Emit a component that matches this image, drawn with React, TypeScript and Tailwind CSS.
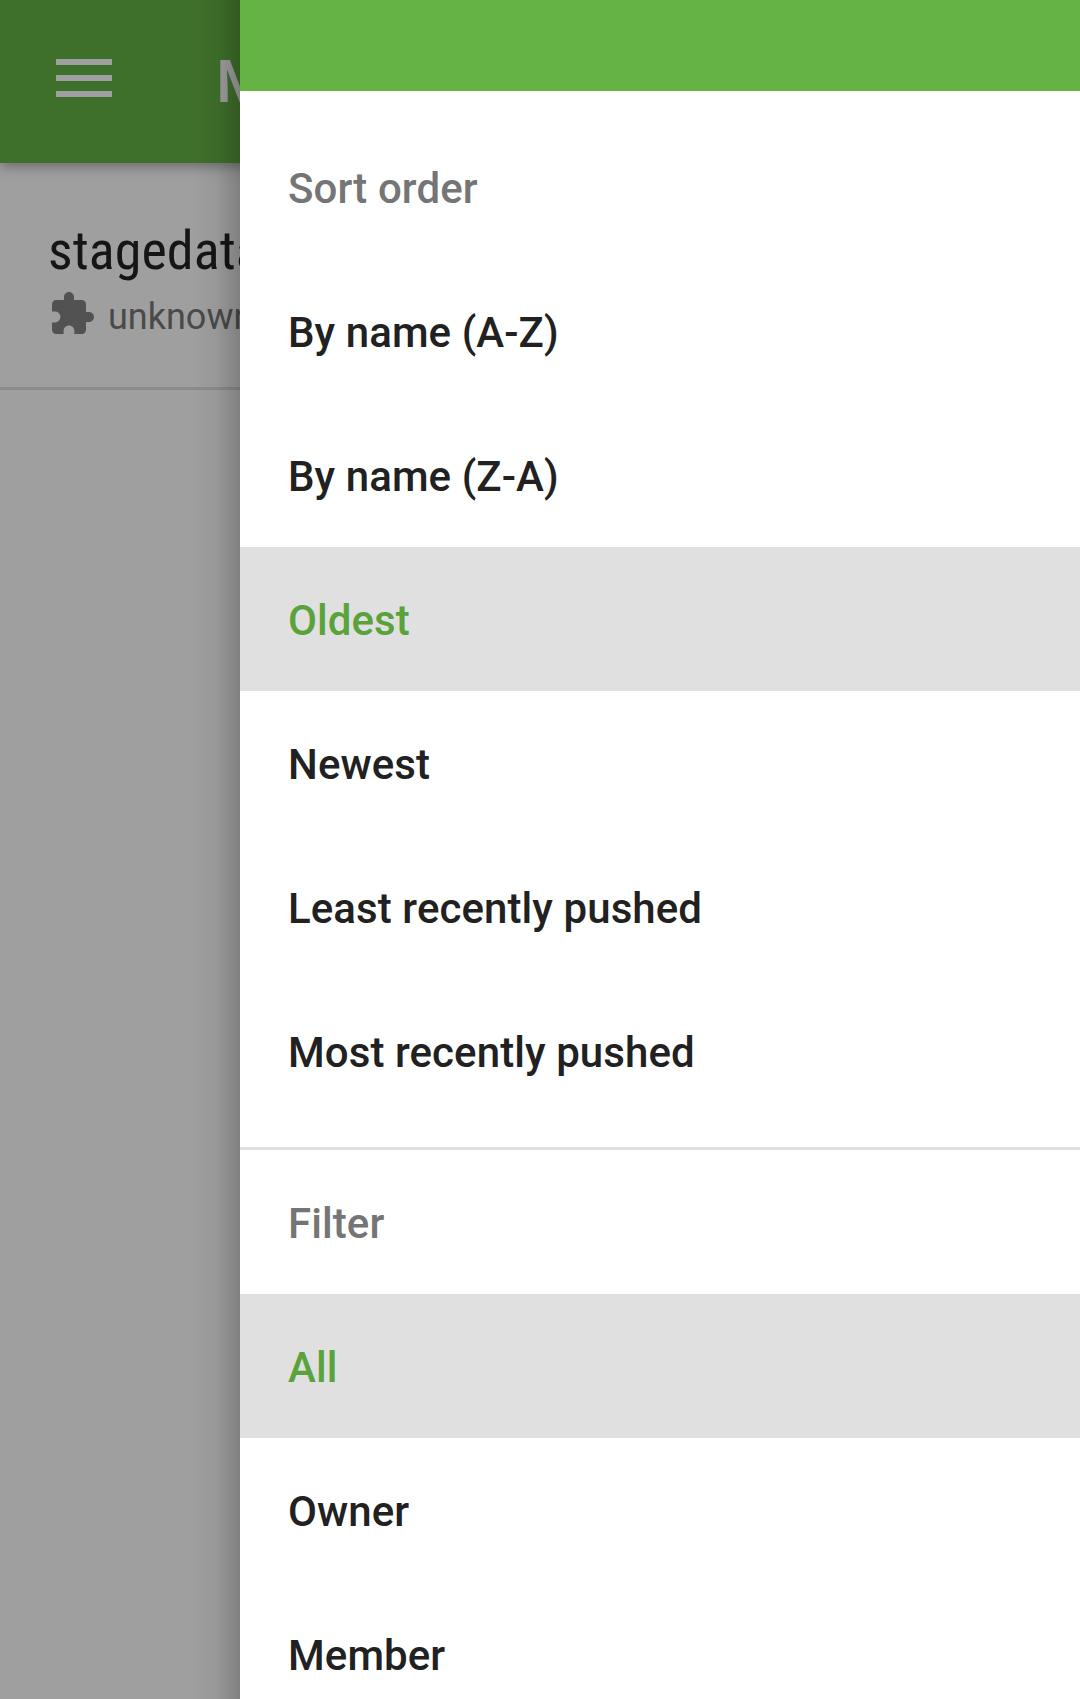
import React from "react";

type Entry = { label: string; selected?: boolean };

const sortOptions: Entry[] = [
  { label: "By name (A-Z)" },
  { label: "By name (Z-A)" },
  { label: "Oldest", selected: true },
  { label: "Newest" },
  { label: "Least recently pushed" },
  { label: "Most recently pushed" },
];

const filterOptions: Entry[] = [
  { label: "All", selected: true },
  { label: "Owner" },
  { label: "Member" },
];

function Item({ label, selected }: Entry) {
  return (
    <button
      className={
        selected
          ? "flex h-36 w-full shrink-0 items-center bg-[#e0e0e0] pt-0.5 pl-12 tracking-[0.08px] text-[#5aa23b]"
          : "flex h-36 w-full shrink-0 items-center pt-0.5 pl-12 tracking-[0.08px] text-[#212121]"
      }
    >
      {label}
    </button>
  );
}

function Heading({ children }: { children: string }) {
  return (
    <h2 className="flex h-36 shrink-0 items-center pt-0.5 pl-12 tracking-[0.08px] text-[#757575]">
      {children}
    </h2>
  );
}

export default function App() {
  return (
    <div className="relative h-[1699px] w-[1080px] overflow-hidden bg-[#9f9f9f] font-[Roboto,sans-serif]">
      <header className="relative flex h-[163px] items-center bg-[#3f702b] shadow-[0_3px_12px_rgba(0,0,0,0.35)]">
        <button aria-label="Menu" className="mb-[7px] ml-14 flex w-14 flex-col gap-2.5">
          <span className="h-1.5 bg-[#9f9f9f]" />
          <span className="h-1.5 bg-[#9f9f9f]" />
          <span className="h-1.5 bg-[#9f9f9f]" />
        </button>
        <h1 className="ml-[104px] text-[60px] font-medium whitespace-nowrap text-[#9f9f9f]">My repositories</h1>
      </header>
      <section className="flex h-[227px] flex-col border-b-[3px] border-[#8c8c8c] px-12 pt-[52px]">
        <div className="font-['Roboto_Condensed',Roboto,sans-serif] text-[54px] leading-[72px] tracking-[0.09px] text-[#151515]">
          stagedata
        </div>
        <div className="flex items-start text-[36px] text-[#4a4a4a]">
          <svg className="mt-[3px] mr-3 h-12 w-12 fill-[#525252]" viewBox="0 0 24 24">
            <path d="M20.500 11H19V7c0-1.100-.9-2-2-2h-4V3.500C13 2.120 11.880 1 10.500 1S8 2.120 8 3.500V5H4c-1.100 0-1.990.9-1.990 2v3.800H3.500c1.490 0 2.700 1.210 2.700 2.700s-1.210 2.700-2.700 2.700H2V20c0 1.100.9 2 2 2h3.800v-1.500c0-1.490 1.210-2.700 2.700-2.700 1.490 0 2.700 1.210 2.700 2.700V22H17c1.100 0 2-.9 2-2v-4h1.500c1.380 0 2.500-1.120 2.500-2.500S21.880 11 20.500 11z" />
          </svg>
          <span className="pt-1.5 leading-[48px]">unknown</span>
        </div>
      </section>
      <div className="absolute inset-y-0 right-[840px] w-12 bg-linear-to-r from-black/0 via-black/5 to-black/20" />
      <aside className="absolute inset-y-0 right-0 flex w-[840px] flex-col overflow-hidden bg-white text-[42px] font-medium">
        <div className="h-[91px] shrink-0 bg-[#66b345]" />
        <div className="h-6 shrink-0" />
        <Heading>Sort order</Heading>
        {sortOptions.map((o) => <Item key={o.label} {...o} />)}
        <div className="mt-6 h-[3px] shrink-0 bg-[#e0e0e0]" />
        <Heading>Filter</Heading>
        {filterOptions.map((o) => <Item key={o.label} {...o} />)}
      </aside>
    </div>
  );
}
